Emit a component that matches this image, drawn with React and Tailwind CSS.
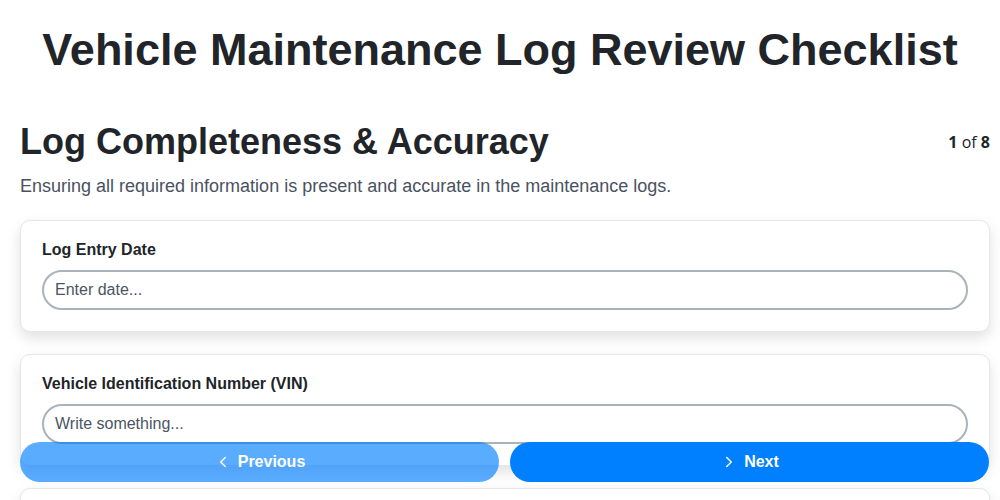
import React from "react";
import { ChevronLeft, ChevronRight } from "lucide-react";

const fields = [
  { label: "Log Entry Date", placeholder: "Enter date..." },
  { label: "Vehicle Identification Number (VIN)", placeholder: "Write something..." },
  { label: "Odometer Reading", placeholder: "Enter number..." },
];

export default function App() {
  return (
    <div
      className="min-h-screen bg-white text-[#212529]"
      style={{ fontFamily: '"Liberation Sans", Arial, sans-serif' }}
    >
      <h1 className="pt-[23px] text-center text-[45px] leading-[54px] font-bold text-[#212529]">
        Vehicle Maintenance Log Review Checklist
      </h1>
      <div className="pl-[20px] pr-[10px] pt-[43px] pb-[80px]">
        <div className="flex items-center justify-between">
          <h2 className="text-[36px] leading-[43px] font-bold text-[#212529]">
            Log Completeness &amp; Accuracy
          </h2>
          <div
            className="text-[16px] text-[#212529]"
            style={{ fontFamily: '"Open Sans", sans-serif' }}
          >
            <span className="font-bold">1</span> of <span className="font-bold">8</span>
          </div>
        </div>
        <p className="mt-[10px] text-[18px] leading-[27px] text-[#4a5260]">
          Ensuring all required information is present and accurate in the maintenance logs.
        </p>
        <div className="mt-[20px] flex flex-col gap-[22px]">
          {fields.map((f) => (
            <div
              key={f.label}
              className="rounded-[10px] border border-[#e6e6ec] bg-white px-[21px] pt-[19px] pb-[21px] shadow-[0_6px_14px_rgba(0,0,0,0.12)]"
            >
              <div className="text-[16px] leading-[20px] font-bold text-[#212529]">{f.label}</div>
              <input
                className="mt-[10px] block h-[40px] w-full rounded-full border-2 border-[#aab2bb] bg-white px-[11px] text-[16px] text-[#212529] placeholder:text-[#4b5563] outline-none"
                placeholder={f.placeholder}
              />
            </div>
          ))}
        </div>
      </div>
      <div className="fixed bottom-[18px] left-[20px] right-[11px] flex gap-[11px]">
        <button className="flex h-[40px] flex-1 items-center justify-center gap-[6px] rounded-full bg-[#0080ff] text-[16px] font-bold text-white opacity-65">
          <ChevronLeft size={18} strokeWidth={2} />
          Previous
        </button>
        <button className="flex h-[40px] flex-1 items-center justify-center gap-[6px] rounded-full bg-[#0080ff] text-[16px] font-bold text-white">
          <ChevronRight size={18} strokeWidth={2} />
          Next
        </button>
      </div>
    </div>
  );
}
